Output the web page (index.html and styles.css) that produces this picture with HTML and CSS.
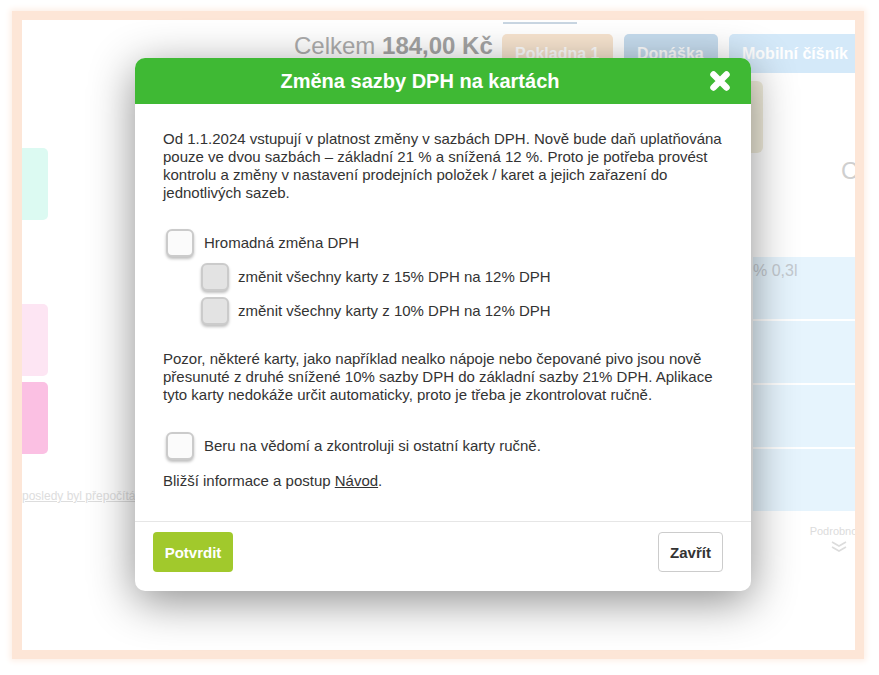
FILE: index.html
```html
<!DOCTYPE html>
<html lang="cs">
<head>
    <meta charset="UTF-8">
    <meta name="viewport" content="width=device-width, initial-scale=1.0">
    <title>Změna sazby DPH na kartách</title>
    <link rel="stylesheet" href="styles.css">
</head>
<body>
    <div class="frame">
        <div class="app">
            <div class="topbar">
                <div class="total">Celkem <b>184,00 Kč</b></div>
                <div class="tab-group">
                    <span class="tab-line"></span>
                    <span class="tab tab-pokladna">Pokladna 1</span>
                </div>
                <span class="tab tab-donaska">Donáška</span>
                <span class="tab tab-mobil">Mobilní číšník</span>
            </div>

            <div class="main">
                <div class="left-col">
                    <div class="card card-mint"></div>
                    <div class="card card-rose"></div>
                    <div class="card card-pink"></div>
                    <div class="note">posledy byl přepočítán</div>
                </div>

                <div class="right-col">
                    <div class="beige"></div>
                    <div class="big-c">C</div>
                    <div class="rows">
                        <div class="row">% 0,3l</div>
                        <div class="row"></div>
                        <div class="row"></div>
                        <div class="row"></div>
                    </div>
                    <div class="more">
                        <span>Podrobnosti</span>
                        <svg width="16" height="12" viewBox="0 0 16 12">
                            <path d="M1 1 L8 5 L15 1 M1 6 L8 10 L15 6" fill="none" stroke="#dcdcdc" stroke-width="1.6"/>
                        </svg>
                    </div>
                </div>
            </div>
        </div>
    </div>

    <!-- dialog -->
    <div class="modal">
        <div class="modal-header">
            <h2>Změna sazby DPH na kartách</h2>
            <button class="close" type="button" aria-label="Zavřít">
                <svg width="22" height="22" viewBox="0 0 22 22">
                    <path d="M4.5 4.5 L17.5 17.5 M17.5 4.5 L4.5 17.5" stroke="#fff" stroke-width="6.5" stroke-linecap="round"/>
                </svg>
            </button>
        </div>

        <div class="modal-body">
            <p>Od 1.1.2024 vstupují v platnost změny v sazbách DPH. Nově bude daň uplatňována pouze ve dvou sazbách – základní 21 % a snížená 12 %. Proto je potřeba provést kontrolu a změny v nastavení prodejních položek / karet a jejich zařazení do jednotlivých sazeb.</p>

            <label class="check check-main">
                <input type="checkbox" id="hromadna">
                <span>Hromadná změna DPH</span>
            </label>
            <label class="check check-sub">
                <input type="checkbox" disabled>
                <span>změnit všechny karty z 15% DPH na 12% DPH</span>
            </label>
            <label class="check check-sub">
                <input type="checkbox" disabled>
                <span>změnit všechny karty z 10% DPH na 12% DPH</span>
            </label>

            <p class="warning">Pozor, některé karty, jako například nealko nápoje nebo čepované pivo jsou nově přesunuté z druhé snížené 10% sazby DPH do základní sazby 21% DPH. Aplikace tyto karty nedokáže určit automaticky, proto je třeba je zkontrolovat ručně.</p>

            <label class="check check-confirm">
                <input type="checkbox" id="beru">
                <span>Beru na vědomí a zkontroluji si ostatní karty ručně.</span>
            </label>

            <p class="info">Bližší informace a postup <a href="#">Návod</a>.</p>
        </div>

        <div class="modal-footer">
            <button class="btn btn-confirm" type="button">Potvrdit</button>
            <button class="btn btn-close" type="button">Zavřít</button>
        </div>
    </div>
</body>
</html>
```

FILE: styles.css
```css
body {
    font-family: "Liberation Sans", Arial, sans-serif;
    background-color: #fff;
    margin: 0;
    padding: 0;
    color: #333;
}

.frame {
    margin: 11px 15px 17px 12px;
    border: 9px solid #fde6d7;
    border-left-width: 10px;
    box-shadow: 0 0 6px 2px #fdefe6;
}

.app {
    height: 630px;
    overflow: hidden;
    background-color: #fff;
}

/* horni lista */
.topbar {
    display: flex;
    align-items: flex-end;
    gap: 11px;
    padding: 2px 0 0 272px;
    white-space: nowrap;
}

.total {
    width: 197px;
    flex-shrink: 0;
    font-size: 24px;
    color: #acacac;
    line-height: 26px;
    margin-bottom: 14px;
}

.total b {
    color: #a4a4a4;
}

.tab-group {
    display: flex;
    flex-direction: column;
}

.tab-line {
    width: 74px;
    height: 2px;
    margin: 0 0 10px 1px;
    background-color: #c9d6e2;
}

.tab {
    display: block;
    height: 39px;
    line-height: 39px;
    border-radius: 5px;
    color: #fff;
    font-weight: bold;
    font-size: 16px;
    flex-shrink: 0;
    padding-left: 13px;
    box-sizing: border-box;
}

.tab-pokladna {
    width: 111px;
    background-color: #f7e4cf;
}

.tab-donaska {
    width: 94px;
    background-color: #c6dcee;
}

.tab-mobil {
    width: 140px;
    background-color: #d4e9f9;
}

.main {
    display: flex;
    justify-content: space-between;
}

.left-col {
    width: 26px;
}

.card {
    height: 72px;
    border-radius: 0 5px 5px 0;
}

.card-mint {
    margin-top: 75px;
    background-color: #dcfaf2;
}

.card-rose {
    margin-top: 84px;
    background-color: #fde5f3;
}

.card-pink {
    margin-top: 6px;
    background-color: #fbc0e3;
}

.note {
    margin-top: 35px;
    font-size: 12px;
    line-height: 14px;
    color: #dddddd;
    text-decoration: underline;
    white-space: nowrap;
}

.right-col {
    width: 112px;
}

.beige {
    margin-top: 8px;
    width: 20px;
    height: 72px;
    border-radius: 0 6px 6px 0;
    background-color: #f1eddc;
}

.big-c {
    margin-top: 4px;
    padding-left: 98px;
    font-size: 24px;
    line-height: 28px;
    color: #cfcfcf;
    white-space: nowrap;
}

.rows {
    margin: 72px 0 0 10px;
    display: flex;
    flex-direction: column;
    gap: 2px;
}

.row {
    height: 62px;
    background-color: #e6f4fd;
    font-size: 16px;
    line-height: 28px;
    color: #c3c9cf;
}

.more {
    margin: 14px 0 0 66px;
    display: flex;
    flex-direction: column;
    align-items: center;
    width: 60px;
    font-size: 11px;
    line-height: 13px;
    color: #dcdcdc;
    white-space: nowrap;
}

.more svg {
    margin-top: 3px;
}

/* dialog */
.modal {
    position: absolute;
    left: 135px;
    top: 58px;
    width: 616px;
    background-color: #fff;
    border-radius: 10px;
    box-shadow: 0 10px 45px rgba(0, 0, 0, 0.45);
    overflow: hidden;
}

.modal-header {
    height: 46px;
    background-color: #3fb934;
    display: flex;
    align-items: center;
    padding: 0 11px 0 5px;
}

.modal-header h2 {
    flex: 1;
    margin: 0;
    text-align: center;
    color: #fff;
    font-size: 20px;
    font-weight: bold;
}

.close {
    width: 40px;
    height: 40px;
    padding: 0;
    border: none;
    background: none;
    display: flex;
    align-items: center;
    justify-content: center;
    cursor: pointer;
}

.modal-body {
    padding: 26px 28px 31px;
    font-size: 15px;
    line-height: 18px;
}

.modal-body p {
    margin: 0;
}

.check {
    display: flex;
    align-items: center;
    gap: 10px;
}

.check input {
    appearance: none;
    -webkit-appearance: none;
    width: 28px;
    height: 28px;
    margin: 0;
    border: 2px solid #cbcbcb;
    border-radius: 6px;
    background-color: #fbfbfb;
    box-shadow: 0 2px 3px rgba(0, 0, 0, 0.25);
    flex-shrink: 0;
}

.check input:disabled {
    background-color: #e3e3e3;
}

.check input:checked {
    background-color: #3fb934;
    border-color: #3fb934;
}

.check-main {
    margin: 27px 0 0 3px;
}

.check-sub {
    margin: 6px 0 0 38px;
    gap: 9px;
}

.warning {
    margin-top: 25px !important;
}

.check-confirm {
    margin: 28px 0 0 3px;
}

.info {
    margin-top: 12px !important;
}

.info a {
    color: #333;
}

.modal-footer {
    border-top: 1px solid #e6e6e6;
    padding: 10px 28px 19px 18px;
    display: flex;
    justify-content: space-between;
}

.btn {
    height: 40px;
    border-radius: 4px;
    font-family: "Liberation Sans", Arial, sans-serif;
    font-size: 15px;
    font-weight: bold;
    cursor: pointer;
}

.btn-confirm {
    width: 80px;
    border: none;
    background-color: #a1c92c;
    color: #fff;
}

.btn-close {
    width: 65px;
    border: 1px solid #cccccc;
    background-color: #fff;
    color: #333;
}
```
